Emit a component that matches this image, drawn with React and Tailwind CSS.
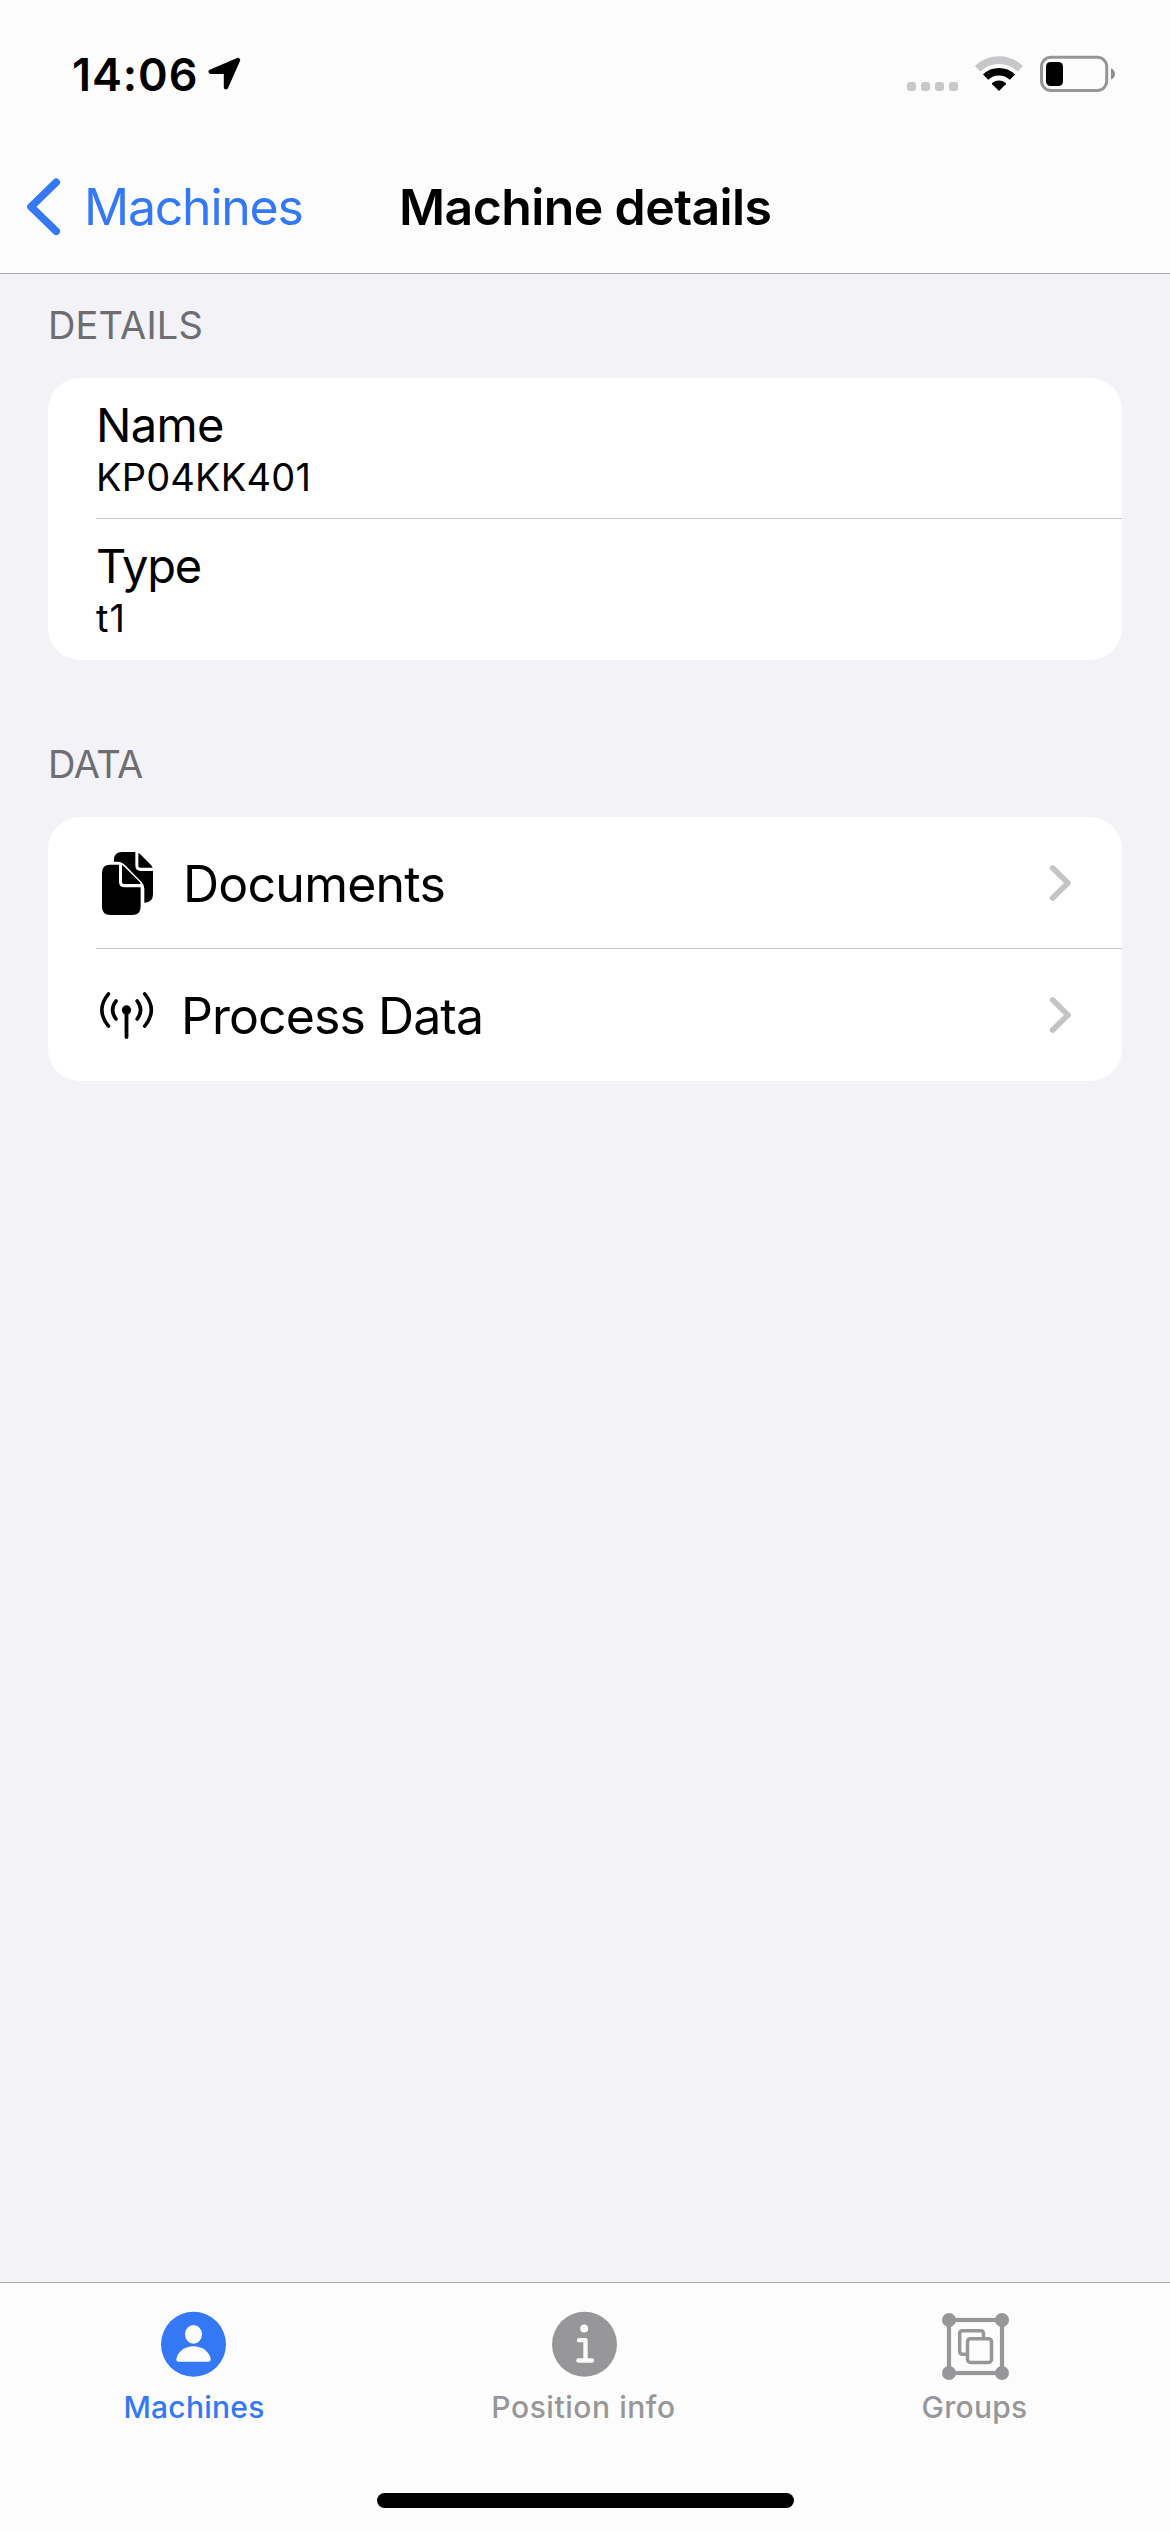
function StatusBar() {
  return (
    <div className="flex h-[140px] items-start justify-between pr-[53px] pl-[72px]">
      <div className="flex items-start pt-[47px]">
        <span className="w-[126px] text-[45px] leading-[55px] font-semibold tracking-[0.9px]">14:06</span>
        <svg className="mt-[9px] ml-[8px] h-[36px] w-[36px]" viewBox="206 56 36 36">
          <path d="M238 60 L210.6 71.7 H226 V87.2 Z" fill="#000" stroke="#000" strokeWidth="4.4" strokeLinejoin="round" />
        </svg>
      </div>
      <div className="flex items-start pt-[50px]">
        <svg className="h-[46px] w-[51px]" viewBox="907 50 51 46" fill="#c8c8ca">
          <rect x="907" y="82" width="9" height="9" rx="3" />
          <rect x="921" y="82" width="9" height="9" rx="3" />
          <rect x="935" y="82" width="9" height="9" rx="3" />
          <rect x="949" y="82" width="9" height="9" rx="3" />
        </svg>
        <svg className="ml-[12px] h-[46px] w-[58px]" viewBox="970 50 58 46">
          <path d="M977.6 68.8 A30.8 30.8 0 0 1 1020.4 68.8" fill="none" stroke="#c8c8ca" strokeWidth="7.6" />
          <path d="M985.6 77.1 A19.3 19.3 0 0 1 1012.4 77.1" fill="none" stroke="#000" strokeWidth="7.4" />
          <path d="M999 91 L992.2 84.2 A1 1 0 0 1 992.4 82.8 A11 11 0 0 1 1005.6 82.8 A1 1 0 0 1 1005.8 84.2 Z" fill="#000" />
        </svg>
        <svg className="ml-[7px] h-[46px] w-[82px]" viewBox="1035 50 82 46">
          <rect x="1041.5" y="57.2" width="65.2" height="33.3" rx="9.5" fill="none" stroke="#969697" strokeWidth="3" />
          <rect x="1046" y="62" width="17" height="24" rx="4.5" fill="#000" />
          <path d="M1111 68.3 C1116.3 70.5 1116.3 77.5 1111 79.7 Z" fill="#8d8d8e" />
        </svg>
      </div>
    </div>
  );
}

function NavBar() {
  return (
    <div className="grid h-[133px] grid-cols-[399px_1fr] items-start pt-[37px]">
      <button className="flex items-start text-[#3478f6]">
        <svg className="ml-[24px] h-[60px] w-[40px]" viewBox="24 177 40 60">
          <path d="M56.2 182.3 L31 206.8 L56.2 231.3" fill="none" stroke="currentColor" strokeWidth="7.6" strokeLinecap="round" strokeLinejoin="round" />
        </svg>
        <span className="ml-[20px] text-[50px] leading-[60px] tracking-[-1.24px]">Machines</span>
      </button>
      <h1 className="text-[50px] leading-[60px] font-semibold tracking-[-0.6px]">Machine details</h1>
    </div>
  );
}

function DetailRow({ label, value, labelClass, valueClass, divider }) {
  return (
    <div className="pl-12">
      <div className={divider ? "h-[141px] border-b border-[#c6c6c8] pt-[18px]" : "h-[141px] pt-[18px]"}>
        <div className={labelClass}>{label}</div>
        <div className={valueClass}>{value}</div>
      </div>
    </div>
  );
}

function Chevron() {
  return (
    <svg className="mt-[47px] mr-[49px] ml-auto h-[38px] w-[25px]" viewBox="204 222 75 114">
      <path d="M218 234 L264 279 L218 324" fill="none" stroke="#c4c4c6" strokeWidth="17" strokeLinecap="round" strokeLinejoin="round" />
    </svg>
  );
}

function DocumentsIcon() {
  return (
    <svg className="mt-[35px] ml-[6px] h-[63px] w-[51px]" viewBox="216 366 153 189">
      <path d="M276 366 H316 V406 Q316 423 332 423 H369 V493 Q369 518 344 518 H343 V476 Q343 464 334 455 L288 408 Q276 395 262 395 H252 V390 Q252 366 276 366 Z" />
      <path d="M325 369 Q328 370 331 373 L363 405 Q366 408 368 413 H331 Q325 413 325 407 Z" />
      <path d="M240 404 H267 V455 Q267 472 284 472 H332 V530 Q332 555 307 555 H241 Q216 555 216 530 V428 Q216 404 240 404 Z" />
      <path d="M276 405 Q280 407 283 410 L327 454 Q331 458 332 462 H282 Q276 462 276 456 Z" />
    </svg>
  );
}

function AntennaIcon() {
  return (
    <svg className="mt-[43px] ml-[4px] h-[48px] w-[54px]" viewBox="210 786 162 144" fill="none" stroke="#000" strokeLinecap="round">
      <circle cx="289.5" cy="840" r="14" fill="#000" stroke="none" />
      <path d="M289.5 842 V921" strokeWidth="11.5" />
      <path d="M258 813 Q237.5 840 258 867 M321.5 813 Q342 840 321.5 867" strokeWidth="11" />
      <path d="M235.5 791.5 Q195.5 840 235.5 888.5 M344 791.5 Q384 840 344 888.5" strokeWidth="10.5" />
    </svg>
  );
}

function PersonIcon() {
  return (
    <svg className="h-[70px] w-[70px]" viewBox="237 153 210 210">
      <circle cx="340.5" cy="253" r="97.5" fill="currentColor" />
      <ellipse cx="340.5" cy="223" rx="25.5" ry="28" fill="#fcfcfc" />
      <path d="M289 297 C293 274 315 258.5 340.5 258.5 C366 258.5 388 274 392 297 Q392.5 305 385 305 H296 Q288.5 305 289 297 Z" fill="#fcfcfc" />
    </svg>
  );
}

function InfoIcon() {
  return (
    <svg className="h-[70px] w-[70px]" viewBox="294 153 210 210">
      <circle cx="400.5" cy="253" r="97.5" fill="currentColor" />
      <circle cx="399.5" cy="205.5" r="12" fill="#fcfcfc" />
      <path d="M384 240.5 H403.5 V301.5 M382 301.5 H423" fill="none" stroke="#fcfcfc" strokeWidth="13" strokeLinecap="round" strokeLinejoin="round" />
    </svg>
  );
}

function GroupsIcon() {
  return (
    <svg className="h-[70px] w-[70px]" viewBox="237 153 210 210" fill="none" stroke="currentColor">
      <rect x="264" y="180" width="159" height="159" strokeWidth="12.5" />
      <g fill="currentColor" stroke="none">
        <circle cx="264" cy="180" r="21" />
        <circle cx="423" cy="180" r="21" />
        <circle cx="264" cy="339" r="21" />
        <circle cx="423" cy="339" r="21" />
      </g>
      <path d="M367.5 231 V221 Q367.5 212 358.5 212 H305 Q296 212 296 221 V274 Q296 283 305 283 H315" strokeWidth="10.5" />
      <rect x="319.5" y="236" width="72" height="71.5" rx="9" strokeWidth="10.5" />
    </svg>
  );
}

export default function App() {
  return (
    <div className="flex h-[2532px] w-[1170px] flex-col overflow-hidden bg-[#f2f2f7] font-['Inter',sans-serif] text-black">
      <header className="h-[274px] shrink-0 border-b border-[#a8a8ab] bg-[#fcfcfc]">
        <StatusBar />
        <NavBar />
      </header>

      <main className="flex-1 px-12 pt-[28px]">
        <section>
          <h2 className="text-[38px] leading-[46px] tracking-[0.17px] text-[#6d6d72]">DETAILS</h2>
          <div className="mt-[30px] h-[282px] rounded-[32px] bg-white">
            <DetailRow
              label="Name"
              value="KP04KK401"
              labelClass="text-[47px] leading-[57px] tracking-[-0.66px]"
              valueClass="mt-px text-[38px] leading-[46px] tracking-[0.2px]"
              divider
            />
            <DetailRow
              label="Type"
              value="t1"
              labelClass="text-[47px] leading-[57px] tracking-[-1.3px]"
              valueClass="mt-px text-[38px] leading-[46px] tracking-[1px]"
            />
          </div>
        </section>

        <section className="mt-[81px]">
          <h2 className="text-[38px] leading-[46px] tracking-[-0.47px] text-[#6d6d72]">DATA</h2>
          <div className="mt-[30px] h-[264px] rounded-[32px] bg-white pl-12">
            <div className="flex h-[132px] items-start border-b border-[#c6c6c8]">
              <DocumentsIcon />
              <span className="mt-[37px] ml-[30px] text-[50px] leading-[60px] tracking-[-0.76px]">Documents</span>
              <Chevron />
            </div>
            <div className="flex h-[132px] items-start">
              <AntennaIcon />
              <span className="mt-[37px] ml-[27px] text-[50px] leading-[60px] tracking-[-0.93px]">Process Data</span>
              <Chevron />
            </div>
          </div>
        </section>
      </main>

      <footer className="flex h-[250px] shrink-0 flex-col items-center border-t border-[#a8a8ab] bg-[#fcfcfc]">
        <nav className="grid w-full grid-cols-[388px_391px_391px] pt-[28px] text-[30px] leading-[36px] font-medium text-[#979799]">
          <button className="flex flex-col items-center gap-[8px] text-[#3478f6]">
            <PersonIcon />
            <span className="tracking-[0.25px]">Machines</span>
          </button>
          <button className="flex flex-col items-center gap-[8px]">
            <InfoIcon />
            <span className="tracking-[0.55px]">Position info</span>
          </button>
          <button className="flex flex-col items-center gap-[8px]">
            <GroupsIcon />
            <span className="tracking-[0.3px]">Groups</span>
          </button>
        </nav>
        <div className="mt-[68px] h-[15px] w-[417px] rounded-full bg-black" />
      </footer>
    </div>
  );
}
